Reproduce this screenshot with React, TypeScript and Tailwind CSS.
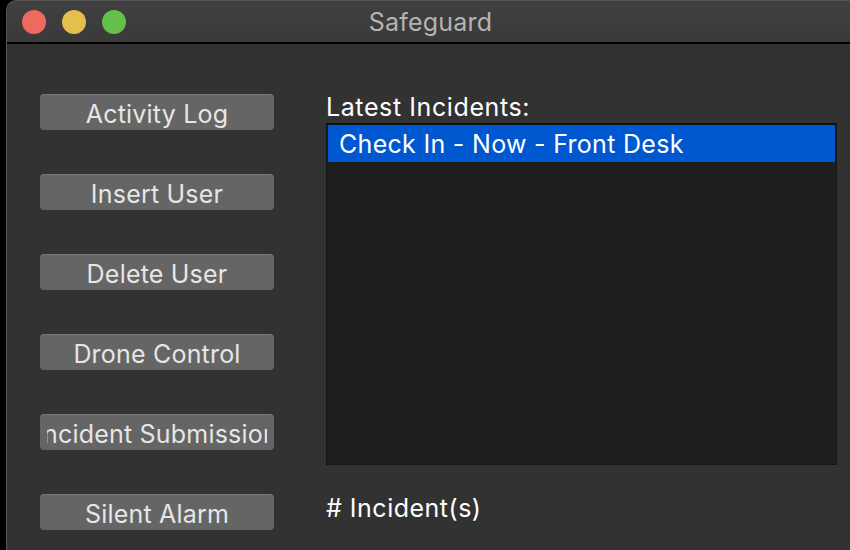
import React from "react";

const buttons = ["Activity Log", "Insert User", "Delete User", "Drone Control", "Incident Submission", "Silent Alarm"];

export default function App() {
  return (
    <div className="w-[850px] h-[550px] bg-black overflow-hidden" style={{ fontFamily: "Inter, 'Liberation Sans', sans-serif" }}>
      <div className="ml-[6px] h-[550px] rounded-tl-[10px] bg-[#323232] border-l border-t border-[#555] overflow-hidden flex flex-col">
        <div className="h-[43px] shrink-0 bg-gradient-to-b from-[#404040] to-[#3a3a3a] border-b-2 border-black relative flex items-center justify-center">
          <div className="absolute left-[15px] top-[9px] flex gap-[16px]">
            <div className="w-[24px] h-[24px] rounded-full bg-[#ee6a5f]" />
            <div className="w-[24px] h-[24px] rounded-full bg-[#e5bf4b]" />
            <div className="w-[24px] h-[24px] rounded-full bg-[#65c04a]" />
          </div>
          <span className="text-[25px] text-[#b4b4b4] ml-[4px] mt-[3px] tracking-[0.2px]">Safeguard</span>
        </div>
        <div className="flex flex-1">
          <div className="pl-[33px] pt-[50px] flex flex-col gap-[44px]">
            {buttons.map((b) => (
              <div key={b} className="w-[234px] h-[36px] rounded-[4px] bg-[#656565] border-t border-[#7a7a7a] flex items-center justify-center">
                <div className="mx-[7px] flex-1 min-w-0 flex justify-center overflow-x-clip whitespace-nowrap">
                  <span className="shrink-0 text-[25px] text-[#e6e6e6] leading-[30px] tracking-[0.2px] mt-[3px]">{b}</span>
                </div>
              </div>
            ))}
          </div>
          <div className="ml-[52px] pt-[48px] flex flex-col">
            <div className="text-[25px] text-white leading-[30px] h-[31px] tracking-[0.6px]">Latest Incidents:</div>
            <div className="w-[511px] h-[342px] bg-[#1e1e1e] border border-[#161616] border-t-2 border-t-[#111] pl-[1px] pr-[1px]">
              <div className="h-[37px] bg-[#0058d0] flex items-center pl-[11px]">
                <span className="text-[25px] text-white tracking-[0.3px] pt-[2px]">Check In - Now - Front Desk</span>
              </div>
            </div>
            <div className="mt-[25px] text-[25px] text-white tracking-[0.5px]">
              # Incident(s)
            </div>
          </div>
        </div>
      </div>
    </div>
  );
}
